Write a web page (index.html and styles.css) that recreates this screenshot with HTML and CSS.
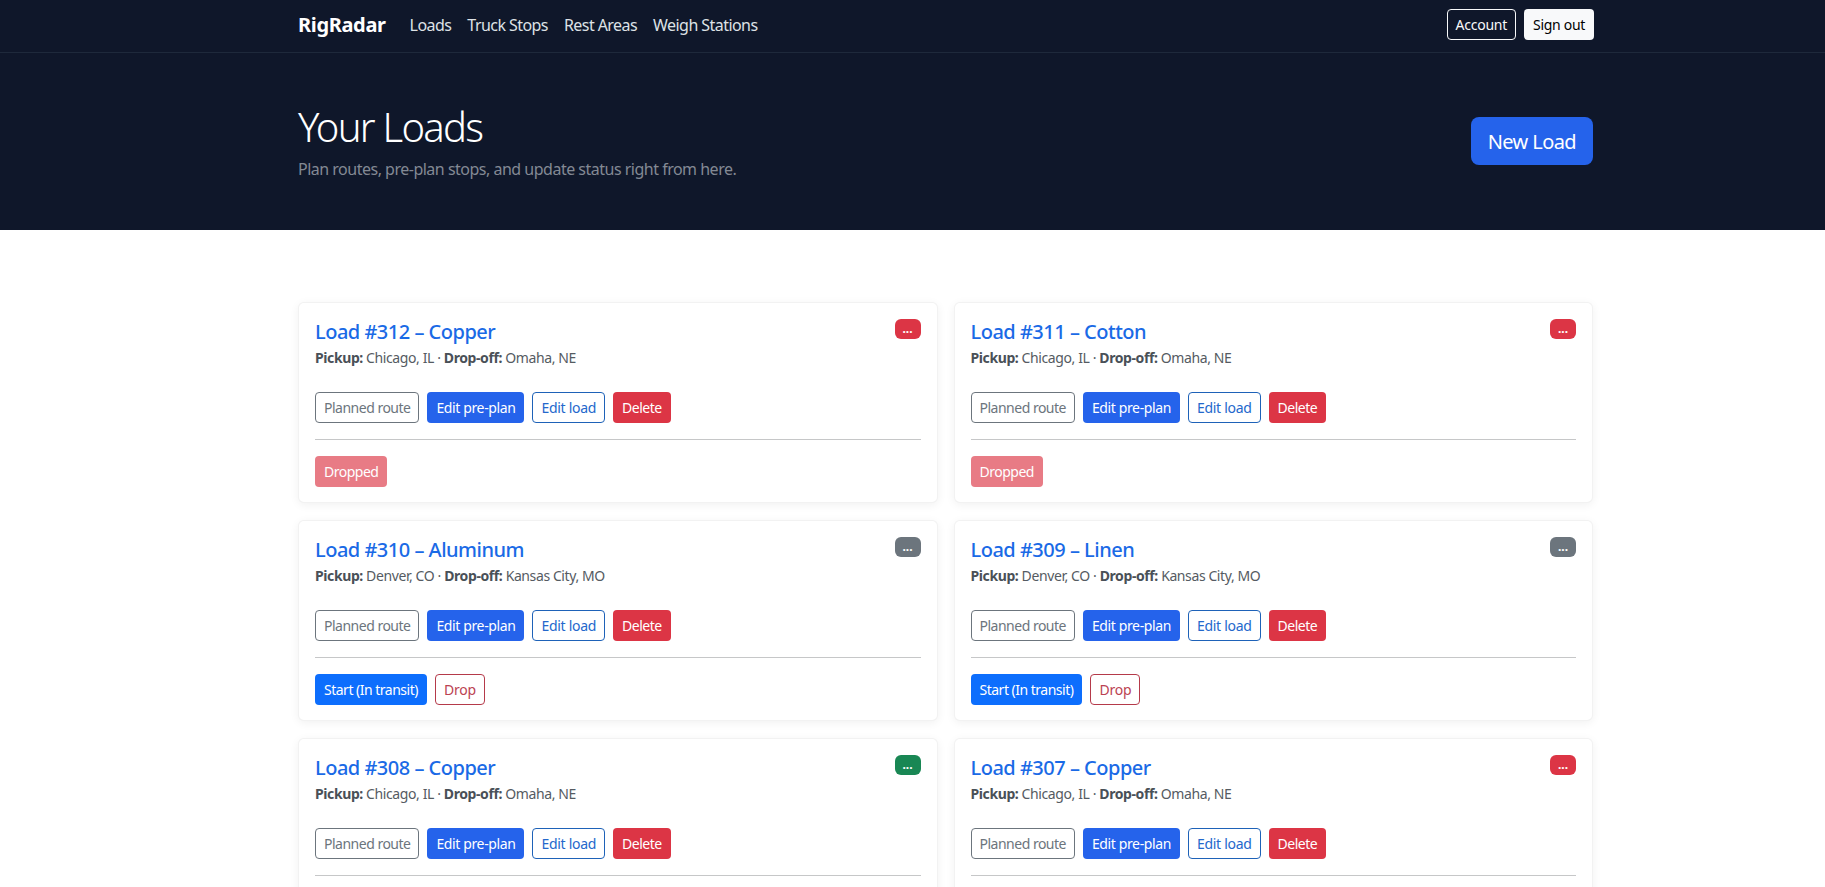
FILE: index.html
```html
<!DOCTYPE html>
<html>

<head>
    <meta charset="UTF-8">
    <title>RigRadar - Your Loads</title>
    <link rel="stylesheet" href="styles.css">
</head>

<body>
    <nav class="topbar">
        <div class="wrap topbar-inner">
            <a class="brand" href="#">RigRadar</a>
            <div class="nav-links">
                <a href="#">Loads</a>
                <a href="#">Truck Stops</a>
                <a href="#">Rest Areas</a>
                <a href="#">Weigh Stations</a>
            </div>
            <div class="nav-actions">
                <a class="btn btn-outline-light" href="#">Account</a>
                <a class="btn btn-light" href="#">Sign out</a>
            </div>
        </div>
    </nav>

    <header class="hero">
        <div class="wrap hero-inner">
            <div>
                <h1>Your Loads</h1>
                <p>Plan routes, pre-plan stops, and update status right from here.</p>
            </div>
            <a class="btn btn-lg" href="#">New Load</a>
        </div>
    </header>

    <main class="wrap load-grid">
        <!-- row 1 -->
        <section class="card">
            <div class="card-head">
                <div>
                    <a class="load-title" href="#">Load #312 – Copper</a>
                    <p class="route"><b>Pickup:</b> Chicago, IL · <b>Drop-off:</b> Omaha, NE</p>
                </div>
                <span class="badge bg-red">...</span>
            </div>
            <div class="actions">
                <a class="btn btn-outline-grey" href="#">Planned route</a>
                <a class="btn btn-blue" href="#">Edit pre-plan</a>
                <a class="btn btn-outline-blue" href="#">Edit load</a>
                <a class="btn btn-red" href="#">Delete</a>
            </div>
            <hr>
            <div class="actions">
                <span class="btn btn-red btn-off">Dropped</span>
            </div>
        </section>

        <section class="card">
            <div class="card-head">
                <div>
                    <a class="load-title" href="#">Load #311 – Cotton</a>
                    <p class="route"><b>Pickup:</b> Chicago, IL · <b>Drop-off:</b> Omaha, NE</p>
                </div>
                <span class="badge bg-red">...</span>
            </div>
            <div class="actions">
                <a class="btn btn-outline-grey" href="#">Planned route</a>
                <a class="btn btn-blue" href="#">Edit pre-plan</a>
                <a class="btn btn-outline-blue" href="#">Edit load</a>
                <a class="btn btn-red" href="#">Delete</a>
            </div>
            <hr>
            <div class="actions">
                <span class="btn btn-red btn-off">Dropped</span>
            </div>
        </section>

        <!-- row 2 -->
        <section class="card">
            <div class="card-head">
                <div>
                    <a class="load-title" href="#">Load #310 – Aluminum</a>
                    <p class="route"><b>Pickup:</b> Denver, CO · <b>Drop-off:</b> Kansas City, MO</p>
                </div>
                <span class="badge bg-grey">...</span>
            </div>
            <div class="actions">
                <a class="btn btn-outline-grey" href="#">Planned route</a>
                <a class="btn btn-blue" href="#">Edit pre-plan</a>
                <a class="btn btn-outline-blue" href="#">Edit load</a>
                <a class="btn btn-red" href="#">Delete</a>
            </div>
            <hr>
            <div class="actions">
                <a class="btn btn-start" href="#">Start (In transit)</a>
                <a class="btn btn-outline-red" href="#">Drop</a>
            </div>
        </section>

        <section class="card">
            <div class="card-head">
                <div>
                    <a class="load-title" href="#">Load #309 – Linen</a>
                    <p class="route"><b>Pickup:</b> Denver, CO · <b>Drop-off:</b> Kansas City, MO</p>
                </div>
                <span class="badge bg-grey">...</span>
            </div>
            <div class="actions">
                <a class="btn btn-outline-grey" href="#">Planned route</a>
                <a class="btn btn-blue" href="#">Edit pre-plan</a>
                <a class="btn btn-outline-blue" href="#">Edit load</a>
                <a class="btn btn-red" href="#">Delete</a>
            </div>
            <hr>
            <div class="actions">
                <a class="btn btn-start" href="#">Start (In transit)</a>
                <a class="btn btn-outline-red" href="#">Drop</a>
            </div>
        </section>

        <!-- row 3 -->
        <section class="card">
            <div class="card-head">
                <div>
                    <a class="load-title" href="#">Load #308 – Copper</a>
                    <p class="route"><b>Pickup:</b> Chicago, IL · <b>Drop-off:</b> Omaha, NE</p>
                </div>
                <span class="badge bg-green">...</span>
            </div>
            <div class="actions">
                <a class="btn btn-outline-grey" href="#">Planned route</a>
                <a class="btn btn-blue" href="#">Edit pre-plan</a>
                <a class="btn btn-outline-blue" href="#">Edit load</a>
                <a class="btn btn-red" href="#">Delete</a>
            </div>
            <hr>
        </section>

        <section class="card">
            <div class="card-head">
                <div>
                    <a class="load-title" href="#">Load #307 – Copper</a>
                    <p class="route"><b>Pickup:</b> Chicago, IL · <b>Drop-off:</b> Omaha, NE</p>
                </div>
                <span class="badge bg-red">...</span>
            </div>
            <div class="actions">
                <a class="btn btn-outline-grey" href="#">Planned route</a>
                <a class="btn btn-blue" href="#">Edit pre-plan</a>
                <a class="btn btn-outline-blue" href="#">Edit load</a>
                <a class="btn btn-red" href="#">Delete</a>
            </div>
            <hr>
        </section>
    </main>
</body>

</html>
```

FILE: styles.css
```css
* {
    box-sizing: border-box;
    margin: 0;
    padding: 0;
}

html,
body {
    height: 887px;
    overflow: hidden;
}

body {
    font-family: "Noto Sans", "Open Sans", sans-serif;
    font-size: 16px;
    line-height: 1.5;
    color: #212529;
    background-color: #fff;
}

a {
    text-decoration: none;
}

/* the reference's centred column sits right of the window's centre */
.wrap {
    width: 1295px;
    margin-left: 298px;
}

.topbar {
    height: 53px;
    background-color: #0f172a;
    border-bottom: 1px solid #1e293b;
}

.topbar-inner {
    display: flex;
    align-items: center;
    height: 49px;
}

.brand {
    font-size: 20px;
    font-weight: 700;
    color: #fff;
    margin-right: 24px;
    letter-spacing: -0.35px;
}

.nav-links {
    display: flex;
    gap: 16px;
    flex: 1;
}

.nav-links a {
    color: #dee2e6;
    letter-spacing: -0.56px;
}

.nav-actions {
    display: flex;
    gap: 8px;
    margin-right: -1px;
}

.btn {
    display: inline-block;
    height: 31px;
    padding: 0 8px;
    font-size: 14px;
    line-height: 29px;
    border: 1px solid transparent;
    border-radius: 4px;
    letter-spacing: -0.4px;
    white-space: nowrap;
}

.btn-outline-light {
    color: #f8f9fa;
    border-color: #f8f9fa;
    letter-spacing: -0.25px;
}

.btn-light {
    color: #000;
    background-color: #f8f9fa;
    letter-spacing: -0.3px;
}

.hero {
    height: 177px;
    background-color: #0f172a;
    color: #fff;
}

.hero-inner {
    display: flex;
    align-items: center;
    justify-content: space-between;
    height: 100%;
}

.hero h1 {
    font-size: 40px;
    font-weight: 300;
    line-height: 1.2;
    margin-bottom: 6px;
    letter-spacing: -1.7px;
}

.hero p {
    color: #838994;
    letter-spacing: -0.5px;
}

.btn-lg {
    height: 48px;
    margin-bottom: 2px;
    padding: 0 16px;
    font-size: 20px;
    line-height: 48px;
    border-radius: 8px;
    color: #fff;
    background-color: #2563eb;
    letter-spacing: -0.6px;
}

.load-grid {
    display: grid;
    grid-template-columns: 1fr 1fr;
    gap: 17px 16px;
    margin-top: 72px;
}

.card {
    height: 201px;
    padding: 16px;
    background-color: #fff;
    border: 1px solid rgba(0, 0, 0, 0.05);
    border-radius: 6px;
    box-shadow: 0 2px 10px rgba(0, 0, 0, 0.06);
}

.card-head {
    display: flex;
    justify-content: space-between;
    align-items: flex-start;
    height: 73px;
}

.load-title {
    display: block;
    margin-top: 1px;
    font-size: 20px;
    font-weight: 500;
    line-height: 24px;
    color: #1a6ae6;
    letter-spacing: -0.5px;
}

.route {
    font-size: 14px;
    color: #555b62;
    margin-top: 3px;
    letter-spacing: -0.4px;
}

.route b {
    color: #495057;
}

.badge {
    width: 26px;
    height: 20px;
    font-size: 12px;
    font-weight: 700;
    line-height: 20px;
    text-align: center;
    color: #fff;
    border-radius: 6px;
}

.bg-red {
    background-color: #dc3545;
}

.bg-grey {
    background-color: #6c757d;
}

.bg-green {
    background-color: #198754;
}

.actions {
    display: flex;
    gap: 8px;
}

.btn-outline-grey {
    color: #6c757d;
    border-color: #6c757d;
    letter-spacing: -0.5px;
}

.btn-blue {
    color: #fff;
    background-color: #2563eb;
    letter-spacing: -0.38px;
}

.btn-outline-blue {
    color: #2468cc;
    border-color: #1e62b8;
    letter-spacing: -0.3px;
}

.btn-red {
    color: #fff;
    background-color: #dc3545;
    letter-spacing: -0.5px;
}

.btn-off {
    opacity: 0.65;
}

.btn-start {
    color: #fff;
    background-color: #0d6efd;
    letter-spacing: -0.5px;
}

.btn-outline-red {
    color: #bb4252;
    border-color: #b53a4a;
    letter-spacing: -0.2px;
}

hr {
    border: 0;
    border-top: 1px solid #c6c7c8;
    margin: 16px 0;
}
```
